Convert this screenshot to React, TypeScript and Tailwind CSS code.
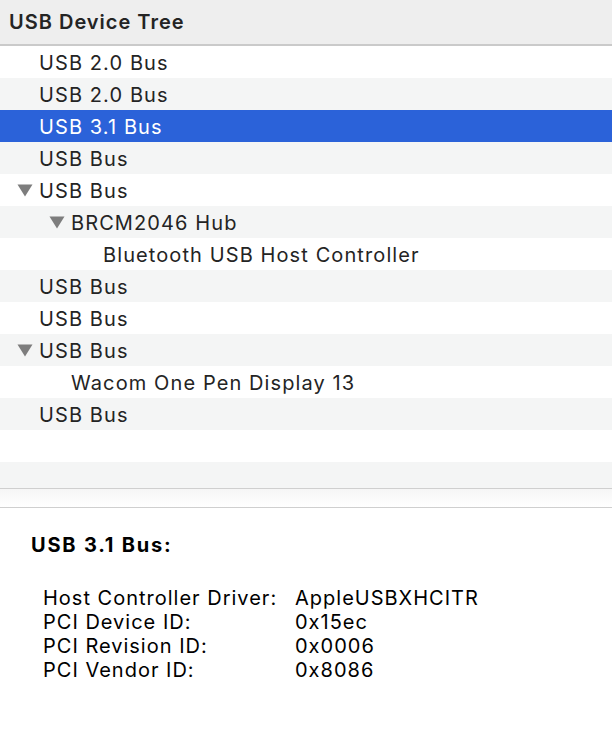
import React from 'react';

interface TreeRow {
    label: string;
    level: number;
    expanded?: boolean;
}

const rows: TreeRow[] = [
    { label: 'USB 2.0 Bus', level: 0 },
    { label: 'USB 2.0 Bus', level: 0 },
    { label: 'USB 3.1 Bus', level: 0 },
    { label: 'USB Bus', level: 0 },
    { label: 'USB Bus', level: 0, expanded: true },
    { label: 'BRCM2046 Hub', level: 1, expanded: true },
    { label: 'Bluetooth USB Host Controller', level: 2 },
    { label: 'USB Bus', level: 0 },
    { label: 'USB Bus', level: 0 },
    { label: 'USB Bus', level: 0, expanded: true },
    { label: 'Wacom One Pen Display 13', level: 1 },
    { label: 'USB Bus', level: 0 },
    { label: '', level: 0 },
    { label: '', level: 0 },
];

const details = [
    ['Host Controller Driver:', 'AppleUSBXHCITR'],
    ['PCI Device ID:', '0x15ec'],
    ['PCI Revision ID:', '0x0006'],
    ['PCI Vendor ID:', '0x8086'],
];

const indent = ['pl-[39px]', 'pl-[71px]', 'pl-[103px]'];

const Disclosure: React.FC = () => (
    <svg width="16" height="13" viewBox="0 0 16 13" className="absolute -left-[22px] top-[10px]">
        <path d="M0.5 0.5 H15.5 L8 12.5 Z" fill="#7d7d7d" />
    </svg>
);

const App: React.FC = () => {
    const selected = 2;

    return (
        <div className="w-[612px] h-[752px] bg-white text-[#242424] overflow-hidden font-['Inter','Liberation_Sans',sans-serif]">
            {/* Header */}
            <div className="h-[46px] bg-[#eeeeee] border-b-2 border-[#cacaca] flex items-center pl-[9px] text-[20px] tracking-[1px] font-semibold">
                USB Device Tree
            </div>

            {/* Tree */}
            <div className="h-[442px] overflow-hidden">
                {rows.map((row, i) => (
                    <div
                        key={i}
                        className={`h-8 flex items-center text-[20px] tracking-[1.1px] ${indent[row.level]} ${i === selected ? 'bg-[#2b62d9] text-white' : i % 2 === 1 ? 'bg-[#f4f5f5]' : 'bg-white'
                            }`}
                    >
                        <span className="relative h-8 leading-8 pt-px">
                            {row.expanded && <Disclosure />}
                            {row.label}
                        </span>
                    </div>
                ))}
            </div>

            {/* Splitter */}
            <div className="h-[20px] border-y border-[#cfcfcf] bg-gradient-to-b from-[#f6f6f6] to-white" />

            {/* Detail */}
            <div className="pt-[25px] text-[20px] tracking-[1px]">
                <div className="pl-[31px] font-bold text-black leading-6 tracking-[1.8px]">USB 3.1 Bus:</div>
                <div className="mt-[29px] pl-[43px] grid grid-cols-[252px_1fr] leading-6 text-black">
                    {details.map(([k, v]) => (
                        <React.Fragment key={k}>
                            <div>{k}</div>
                            <div>{v}</div>
                        </React.Fragment>
                    ))}
                </div>
            </div>
        </div>
    );
};

export default App;
